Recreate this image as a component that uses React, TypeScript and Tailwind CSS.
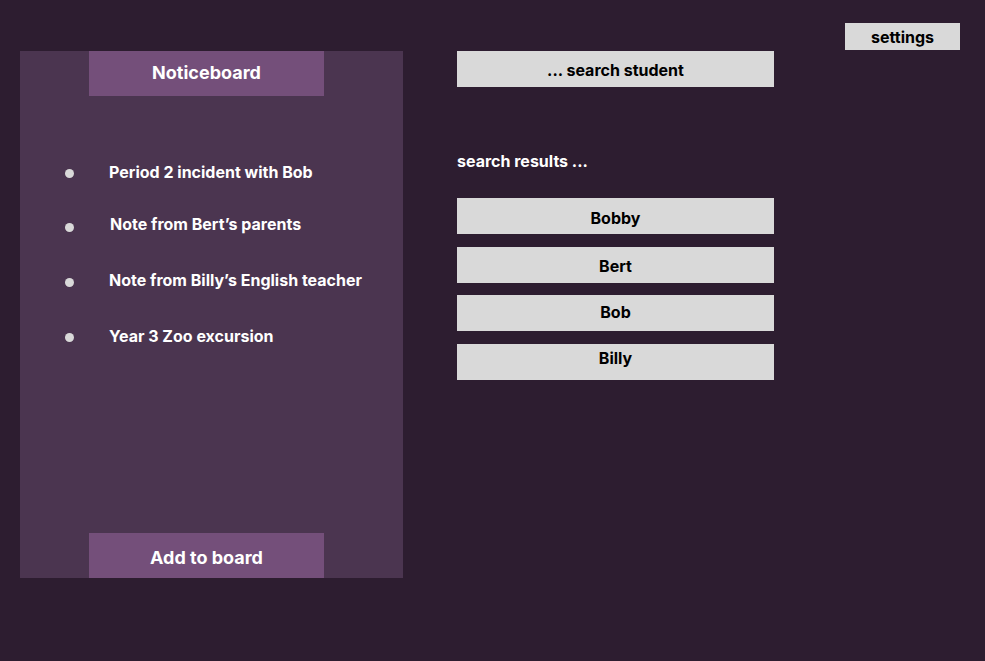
import React from "react";

const notes = [
  { text: "Period 2 incident with Bob", mt: "mt-[66px]", dot: "mt-[7px]", tx: "ml-[35px]" },
  { text: "Note from Bert\u2019s parents", mt: "mt-[32px]", dot: "mt-[9px]", tx: "ml-[36px]" },
  { text: "Note from Billy\u2019s English teacher", mt: "mt-[36px]", dot: "mt-[8px]", tx: "ml-[35px]" },
  { text: "Year 3 Zoo excursion", mt: "mt-[36px]", dot: "mt-[7px]", tx: "ml-[35px]" },
];

const results = [
  { name: "Bobby", mt: "mt-[27px]", pad: "pt-[4px]" },
  { name: "Bert", mt: "mt-[13px]", pad: "pt-[2px]" },
  { name: "Bob", mt: "mt-[12px]", pad: "pb-[2px]" },
  { name: "Billy", mt: "mt-[13px]", pad: "pb-[8px]" },
];

export default function App() {
  return (
    <div
      className="w-[985px] h-[661px] bg-[#2d1d30] overflow-hidden"
      style={{ fontFamily: "Inter, 'Noto Sans', sans-serif" }}
    >
      <div className="flex justify-end pt-[23px] pr-[25px]">
        <div className="w-[115px] h-[27px] bg-[#d9d9d9] flex items-center justify-center pt-[1px] text-black text-[16px] font-bold leading-none">
          settings
        </div>
      </div>
      <div className="flex pl-[20px] mt-[1px]">
        <div className="w-[383px] h-[527px] bg-[#4b3550] flex flex-col">
          <div className="ml-[69px] w-[235px] h-[45px] bg-[#744f7a] flex items-center justify-center pb-[2px] text-white text-[18px] font-bold">
            Noticeboard
          </div>
          <div className="flex flex-col">
            {notes.map((n) => (
              <div key={n.text} className={`flex items-start h-[20px] ${n.mt}`}>
                <div className={`ml-[45px] w-[9px] h-[9px] rounded-full bg-[#d9d9d9] ${n.dot}`} />
                <div className={`${n.tx} text-white text-[16px] font-bold leading-[20px] whitespace-nowrap`}>
                  {n.text}
                </div>
              </div>
            ))}
          </div>
          <div className="mt-auto ml-[69px] w-[235px] h-[45px] bg-[#744f7a] flex items-center justify-center pt-[4px] text-white text-[18px] font-bold">
            Add to board
          </div>
        </div>
        <div className="ml-[54px] w-[317px] flex flex-col">
          <div className="h-[36px] bg-[#d9d9d9] flex items-center justify-center pt-[2px] text-black text-[16px] font-bold">
            ... search student
          </div>
          <div className="mt-[64px] h-[20px] leading-[20px] text-white text-[16px] font-bold">
            search results ...
          </div>
          {results.map((r) => (
            <div
              key={r.name}
              className={`${r.mt} ${r.pad} h-[36px] bg-[#d9d9d9] flex items-center justify-center text-black text-[16px] font-bold`}
            >
              {r.name}
            </div>
          ))}
        </div>
      </div>
    </div>
  );
}
